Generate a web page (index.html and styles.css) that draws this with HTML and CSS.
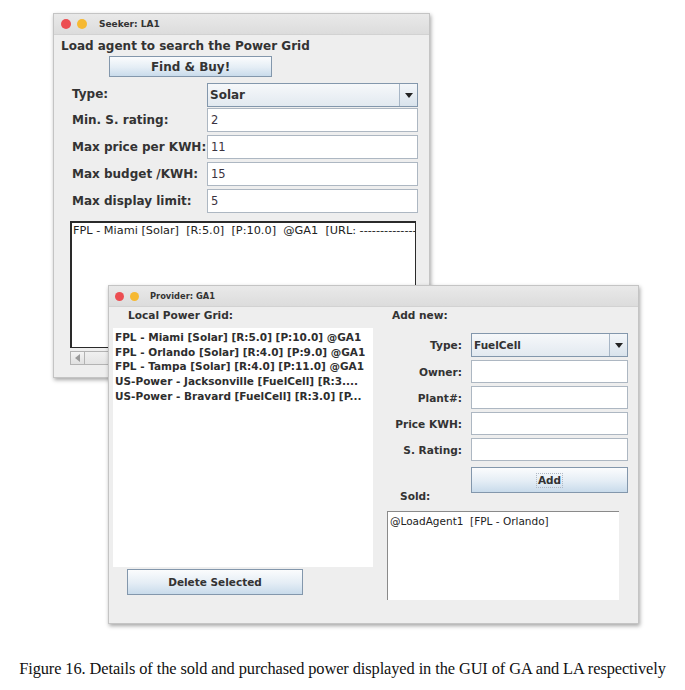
FILE: index.html
```html
<!DOCTYPE html>
<html>
<head>
<meta charset="utf-8">
<link rel="stylesheet" href="styles.css">
</head>
<body>
<div class="desk">
  <div class="win seeker">
    <div class="titlebar">
      <span class="dot red"></span><span class="dot yellow"></span>
      <span class="title">Seeker: LA1</span>
    </div>
    <div class="seeker-body">
      <div class="heading">Load agent to search the Power Grid</div>
      <div class="btn find">Find &amp; Buy!</div>
      <div class="sform">
        <div class="lbl">Type:</div>
        <div class="combo"><span class="combo-val">Solar</span><span class="combo-arrow"><span class="tri"></span></span></div>
        <div class="lbl">Min. S. rating:</div>
        <div class="field">2</div>
        <div class="lbl">Max price per KWH:</div>
        <div class="field">11</div>
        <div class="lbl">Max budget /KWH:</div>
        <div class="field">15</div>
        <div class="lbl">Max display limit:</div>
        <div class="field">5</div>
      </div>
      <div class="results">FPL - Miami [Solar]  [R:5.0]  [P:10.0]  @GA1  [URL: --------------</div>
      <div class="hscroll"><span class="sb-btn"><span class="ltri"></span></span><span class="sb-track"></span></div>
    </div>
  </div>

  <div class="win provider">
    <div class="titlebar ptitle">
      <span class="dot red small"></span><span class="dot yellow small"></span>
      <span class="title ptitle-text">Provider: GA1</span>
    </div>
    <div class="provider-body">
      <div class="left-col">
        <div class="plabel grid-lbl">Local Power Grid:</div>
        <div class="grid-list">
          <div class="item">FPL - Miami [Solar] [R:5.0] [P:10.0] @GA1</div>
          <div class="item">FPL - Orlando [Solar] [R:4.0] [P:9.0] @GA1</div>
          <div class="item">FPL - Tampa [Solar] [R:4.0] [P:11.0] @GA1</div>
          <div class="item">US-Power - Jacksonville [FuelCell] [R:3....</div>
          <div class="item">US-Power - Bravard [FuelCell] [R:3.0] [P...</div>
        </div>
        <div class="btn pbtn delete">Delete Selected</div>
      </div>
      <div class="right-col">
        <div class="plabel addnew">Add new:</div>
        <div class="pform">
          <div class="plbl">Type:</div>
          <div class="combo pcombo"><span class="combo-val">FuelCell</span><span class="combo-arrow"><span class="tri"></span></span></div>
          <div class="plbl">Owner:</div>
          <div class="field pfield"></div>
          <div class="plbl">Plant#:</div>
          <div class="field pfield"></div>
          <div class="plbl">Price KWH:</div>
          <div class="field pfield"></div>
          <div class="plbl">S. Rating:</div>
          <div class="field pfield"></div>
          <div class="plabel sold-lbl">Sold:</div>
          <div class="btn pbtn add"><span class="add-text">Add</span></div>
        </div>
        <div class="sold">@LoadAgent1  [FPL - Orlando]</div>
      </div>
    </div>
  </div>
</div>
<p class="caption">Figure 16. Details of the sold and purchased power displayed in the GUI of GA and LA respectively</p>
</body>
</html>
```
FILE: styles.css
```css
* { box-sizing: border-box; }
html, body { margin: 0; padding: 0; background: #ffffff; }
body { font-family: "DejaVu Sans", sans-serif; color: #333333; }

.desk { position: relative; height: 650px; }

.win {
  position: absolute;
  background: #eeeeee;
  border: 1px solid #c4c4c4;
  box-shadow: 1px 2px 4px rgba(0,0,0,0.35);
  display: flex;
  flex-direction: column;
}
.seeker { left: 53px; top: 13px; width: 377px; height: 365px; }
.provider { left: 108px; top: 285px; width: 531px; height: 339px; }

.titlebar {
  height: 21px;
  flex: none;
  display: flex;
  align-items: center;
  padding-left: 7px;
  background: linear-gradient(#e9e9e9, #dcdcdc);
  border-bottom: 1px solid #d2d2d2;
}
.dot { width: 10px; height: 10px; border-radius: 50%; flex: none; }
.dot.red { background: #ec4e52; }
.dot.yellow { background: #f6b933; margin-left: 6px; }
.dot.small { width: 9px; height: 9px; }
.title { font-weight: bold; font-size: 9px; margin-left: 12px; color: #333; }
.ptitle { padding-left: 6px; }
.ptitle-text { font-size: 8.3px; margin-left: 11px; }

/* ---------- seeker ---------- */
.seeker-body { padding: 4px 0 0 7px; display: flex; flex-direction: column; }
.heading { font-weight: bold; font-size: 12px; line-height: 15px; height: 15px; }

.btn {
  background: linear-gradient(#fbfcfd, #e4edf5 55%, #c9dbeb);
  border: 1px solid #8397ac;
  font-weight: bold;
  display: flex;
  align-items: center;
  justify-content: center;
  color: #333;
}
.find { margin: 2px 0 0 48px; width: 163px; height: 21px; font-size: 12px; }

.sform {
  margin: 6px 0 0 11px;
  display: grid;
  grid-template-columns: 135px 211px;
  grid-template-rows: 22px 24px 24px 24px 24px;
  row-gap: 3px;
}
.sform .combo { margin-bottom: -2px; }
.lbl { font-weight: bold; font-size: 12px; display: flex; align-items: center; }

.combo {
  display: flex;
  background: linear-gradient(#f6f8fa, #e2e9f0);
  border: 1px solid #8397ac;
  font-weight: bold;
  font-size: 12px;
}
.combo-val { flex: 1; display: flex; align-items: center; padding-left: 2px; }
.combo-arrow {
  width: 18px;
  border-left: 1px solid #a7b6c6;
  display: flex;
  align-items: center;
  justify-content: center;
  background: linear-gradient(#f3f6f9, #d9e3ec);
}
.tri {
  width: 0; height: 0;
  border-left: 4.5px solid transparent;
  border-right: 4.5px solid transparent;
  border-top: 5px solid #222;
}
.field {
  background: #ffffff;
  border: 1px solid #adb7c2;
  font-size: 11.5px;
  display: flex;
  align-items: center;
  padding-left: 3px;
  color: #3a3340;
}

.results {
  margin: 8px 0 0 9px;
  width: 346px;
  height: 127px;
  background: #ffffff;
  border: 2px solid #2a2a2a;
  border-right-width: 1px;
  border-bottom-width: 1px;
  font-size: 11.3px;
  white-space: pre;
  overflow: hidden;
  padding: 1px 0 0 1px;
  line-height: 14px;
  color: #222;
}
.hscroll {
  margin: 3px 0 0 9px;
  width: 346px;
  height: 14px;
  display: flex;
  border: 1px solid #b3b3b3;
  background: #e6e6e6;
}
.sb-btn {
  width: 14px;
  border-right: 1px solid #b3b3b3;
  background: linear-gradient(#f4f4f4, #e0e0e0);
  display: flex;
  align-items: center;
  justify-content: center;
}
.ltri {
  width: 0; height: 0;
  border-top: 4px solid transparent;
  border-bottom: 4px solid transparent;
  border-right: 5px solid #9a9a9a;
}
.sb-track { flex: 1; background: linear-gradient(#f0f0f0, #e4e4e4); }

/* ---------- provider ---------- */
.provider-body {
  flex: 1;
  display: flex;
  padding: 2px 0 0 4px;
}
.left-col { width: 260px; display: flex; flex-direction: column; }
.plabel { font-weight: bold; font-size: 10.6px; line-height: 13px; }
.grid-lbl { margin-left: 15px; }
.grid-list {
  margin-top: 6px;
  height: 239px;
  background: #ffffff;
  padding: 2px 0 0 2px;
}
.item {
  font-weight: bold;
  font-size: 10.5px;
  line-height: 14.7px;
  white-space: nowrap;
  color: #2e2e2e;
}
.pbtn { font-size: 10.5px; }
.delete { margin: 2px 0 0 14px; width: 176px; height: 26px; }

.right-col { margin-left: 14px; width: 241px; display: flex; flex-direction: column; }
.addnew { margin-left: 5px; }
.pform {
  margin-top: 11px;
  display: grid;
  grid-template-columns: 75px 157px;
  column-gap: 9px;
  grid-template-rows: 24px 23px 23px 23px 23px 26px;
  row-gap: 3px;
}
.plbl {
  font-weight: bold;
  font-size: 10.6px;
  display: flex;
  align-items: center;
  justify-content: flex-end;
}
.pcombo { font-size: 10.5px; }
.pcombo .combo-val { padding-left: 2px; }
.sold-lbl { align-self: end; margin: 0 0 -13px 13px; }
.add { margin-top: 3px; margin-bottom: -3px; }
.add-text { border: 1px dotted #b0b8c4; padding: 0 1px; line-height: 13px; }

.sold {
  margin-top: 21px;
  width: 232px;
  height: 89px;
  background: #ffffff;
  border-left: 1px solid #8a8a8a;
  border-top: 1px solid #8a8a8a;
  font-size: 10.5px;
  white-space: pre;
  padding: 2px 0 0 2px;
  line-height: 14px;
  color: #222;
}

.caption {
  margin: 9px 0 0 0;
  text-align: center;
  font-family: "Liberation Serif", serif;
  font-size: 16.4px;
  color: #111;
  letter-spacing: -0.1px;
  white-space: nowrap;
}
```
